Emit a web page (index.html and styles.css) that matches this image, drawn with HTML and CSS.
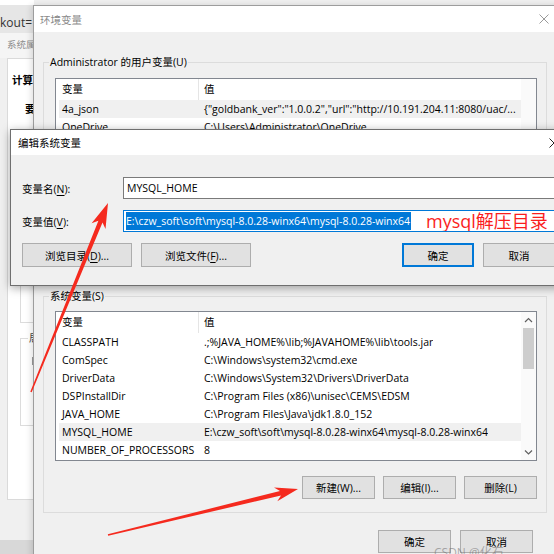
FILE: index.html
```html
<!DOCTYPE html>
<html lang="zh-CN">
<head>
<meta charset="utf-8">
<title>编辑系统变量</title>
<link rel="stylesheet" href="styles.css">
</head>
<body>
<div class="desktop">

  <div class="backwin">
    <div class="bw-top"></div>
    <div class="bw-bar">kout=</div>
    <div class="bw-crumb">系统属</div>
    <div class="bw-panel">
      <div class="bw-tab">计算</div>
      <div class="bw-heading">要</div>
      <div class="bw-box bw-box1"></div>
      <div class="bw-box bw-box2"><span class="bw-box-label">局</span><span class="bw-tick"></span></div>
    </div>
    <div class="bw-foot"></div>
  </div>

  <div class="envwin">
    <div class="titlebar env-titlebar">
      <span class="title inactive">环境变量</span>
      <svg class="close-icon" width="10" height="10" viewBox="0 0 10 10"><path d="M0.5 0.5L9.5 9.5M9.5 0.5L0.5 9.5" stroke="#9a9a9a" stroke-width="1" fill="none"/></svg>
    </div>
    <div class="env-body">
      <div class="group user-group">
        <span class="group-label">Administrator 的用户变量(U)</span>
        <div class="listview">
          <div class="lv-main">
            <div class="lv-header"><span class="c1">变量</span><span class="c2">值</span></div>
            <div class="lv-row hl"><span class="c1">4a_json</span><span class="c2">{"goldbank_ver":"1.0.0.2","url":"http://10.191.204.11:8080/uac/...</span></div>
            <div class="lv-row"><span class="c1">OneDrive</span><span class="c2">C:\Users\Administrator\OneDrive</span></div>
          </div>
          <div class="lv-scroll"></div>
        </div>
      </div>

      <div class="group sys-group">
        <span class="group-label">系统变量(S)</span>
        <div class="listview">
          <div class="lv-main">
            <div class="lv-header"><span class="c1">变量</span><span class="c2">值</span></div>
            <div class="lv-row"><span class="c1">CLASSPATH</span><span class="c2">.;%JAVA_HOME%\lib;%JAVAHOME%\lib\tools.jar</span></div>
            <div class="lv-row"><span class="c1">ComSpec</span><span class="c2">C:\Windows\system32\cmd.exe</span></div>
            <div class="lv-row"><span class="c1">DriverData</span><span class="c2">C:\Windows\System32\Drivers\DriverData</span></div>
            <div class="lv-row"><span class="c1">DSPInstallDir</span><span class="c2">C:\Program Files (x86)\unisec\CEMS\EDSM</span></div>
            <div class="lv-row"><span class="c1">JAVA_HOME</span><span class="c2">C:\Program Files\Java\jdk1.8.0_152</span></div>
            <div class="lv-row hl"><span class="c1">MYSQL_HOME</span><span class="c2">E:\czw_soft\soft\mysql-8.0.28-winx64\mysql-8.0.28-winx64</span></div>
            <div class="lv-row"><span class="c1">NUMBER_OF_PROCESSORS</span><span class="c2">8</span></div>
          </div>
          <div class="lv-scroll">
            <svg class="sb-arrow" width="15" height="16" viewBox="0 0 15 16"><path d="M4 10L7.5 6.5L11 10" stroke="#606060" stroke-width="1.2" fill="none"/></svg>
            <div class="sb-track"><div class="sb-thumb"></div></div>
            <svg class="sb-arrow" width="15" height="16" viewBox="0 0 15 16"><path d="M4 6.5L7.5 10L11 6.5" stroke="#606060" stroke-width="1.2" fill="none"/></svg>
          </div>
        </div>
        <div class="group-buttons">
          <button class="btn btn-sm">新建(W)...</button>
          <button class="btn btn-sm">编辑(I)...</button>
          <button class="btn btn-sm">删除(L)</button>
        </div>
      </div>

      <div class="dialog-buttons">
        <button class="btn btn-sm">确定</button>
        <button class="btn btn-sm">取消</button>
      </div>
    </div>
  </div>

  <div class="editwin">
    <div class="titlebar edit-titlebar">
      <span class="title">编辑系统变量</span>
      <svg class="close-icon" width="10" height="10" viewBox="0 0 10 10"><path d="M0.5 0.5L9.5 9.5M9.5 0.5L0.5 9.5" stroke="#222" stroke-width="1" fill="none"/></svg>
    </div>
    <div class="edit-body">
      <div class="field">
        <span class="field-label">变量名(<u>N</u>):</span>
        <div class="textbox">MYSQL_HOME</div>
      </div>
      <div class="field">
        <span class="field-label">变量值(<u>V</u>):</span>
        <div class="textbox focused"><span class="selection">E:\czw_soft\soft\mysql-8.0.28-winx64\mysql-8.0.28-winx64</span><span class="annotation">mysql解压目录</span></div>
      </div>
      <div class="edit-buttons">
        <button class="btn btn-wide">浏览目录(<u>D</u>)...</button>
        <button class="btn btn-wide">浏览文件(<u>F</u>)...</button>
        <button class="btn btn-sm btn-default push-right">确定</button>
        <button class="btn btn-sm">取消</button>
      </div>
    </div>
  </div>

  <svg class="arrows" width="554" height="554" viewBox="0 0 554 554">
    <polygon points="30.3,391.7 98.4,220.7 91.6,223.3 108,203 105.5,229 102.5,222.4 31.7,392.3" fill="#f52a1e"/>
    <polygon points="107.8,534.2 280,491.1 274,487.6 298,489 277.3,501.2 281,495.4 108.2,535.8" fill="#f52a1e"/>
  </svg>

  <span class="watermark">CSDN @化石</span>
</div>
</body>
</html>
```

FILE: styles.css
```css
* { box-sizing: border-box; margin: 0; padding: 0; }

body {
  width: 554px;
  height: 554px;
  overflow: hidden;
  background: #f0f0f0;
  font-family: "Open Sans", "Noto Sans CJK SC", sans-serif;
  font-size: 10.5px;
  color: #000;
}

.desktop {
  position: relative;
  width: 554px;
  height: 554px;
  overflow: hidden;
}

/* ---------- back window (System properties) ---------- */
.backwin {
  position: absolute;
  left: 0;
  top: 0;
  width: 34px;
  height: 554px;
  background: #f0f0f0;
  overflow: hidden;
}
.bw-top { height: 5px; background: #fff; }
.bw-bar {
  height: 28px;
  background: #e6e6e6;
  font-size: 12px;
  line-height: 16px;
  padding-top: 10px;
  color: #333;
  white-space: nowrap;
}
.bw-crumb {
  height: 25px;
  font-size: 9.5px;
  line-height: 12px;
  padding: 6px 0 0 7px;
  color: #8c8c8c;
  white-space: nowrap;
  background: #f5f5f5;
}
.bw-panel {
  margin-left: 7px;
  height: 442px;
  background: #fff;
  border: 1px solid #dadada;
  border-right: none;
}
.bw-tab {
  margin-top: 12px;
  padding-left: 4px;
  font-size: 10.5px;
  line-height: 18px;
  font-weight: bold;
  white-space: nowrap;
}
.bw-heading {
  margin: 13px 0 0 17px;
  font-size: 10.5px;
  line-height: 14px;
  font-weight: bold;
}
.bw-box {
  margin-left: 12px;
  border: 1px solid #dcdcdc;
  border-right: none;
}
.bw-box1 { margin-top: 80px; height: 127px; }
.bw-box2 { margin-top: 15px; height: 88px; }
.bw-box-label {
  display: block;
  width: max-content;
  margin: -7px 0 0 7px;
  padding: 0 1px;
  background: #fff;
  font-size: 10px;
  line-height: 13px;
  color: #444;
}
.bw-tick {
  display: block;
  margin: 12px 0 0 11px;
  width: 1px;
  height: 8px;
  background: #999;
}
.bw-foot {
  margin-top: 40px;
  height: 20px;
  background: #d8d8d8;
}

/* ---------- generic window parts ---------- */
.titlebar {
  display: flex;
  align-items: center;
  background: #fff;
  white-space: nowrap;
}
.title { flex: 1; }
.title.inactive { color: #8a8a8a; }

.btn {
  height: 23px;
  background: #e1e1e1;
  border: 1px solid #adadad;
  font-family: inherit;
  font-size: 10.5px;
  color: #000;
  white-space: nowrap;
}
.btn-sm { width: 73px; }
.btn-wide { width: 110px; }
.btn-default { border: 2px solid #0078d7; }

/* ---------- environment variables window ---------- */
.envwin {
  position: absolute;
  left: 33px;
  top: 5px;
  width: 540px;
  height: 560px;
  background: #f0f0f0;
  border: 1px solid #9d9d9d;
  box-shadow: -2px 0 6px rgba(0, 0, 0, 0.12);
}
.env-titlebar {
  height: 26px;
  padding-left: 6px;
}
.env-titlebar .close-icon { margin-right: 23px; }

.env-body {
  padding: 30px 0 0 9px;
}

.group {
  width: 504px;
  border: 1px solid #dcdcdc;
  padding: 0 9px 13px 11px;
}
.user-group { padding-bottom: 51px; }
.group-label {
  display: block;
  width: max-content;
  margin: -8px 0 0 -6px;
  padding: 0 1px;
  line-height: 15px;
  height: 15px;
  background: #f0f0f0;
  white-space: nowrap;
}
.sys-group { margin-top: 16px; }

.listview {
  display: flex;
  height: 150px;
  margin-top: 8px;
  background: #fff;
  border: 1px solid #828790;
  overflow: hidden;
}
.sys-group .listview { margin-top: 7px; }
.lv-main {
  flex: 1;
  min-width: 0;
  overflow: hidden;
}
.lv-header {
  display: flex;
  height: 21px;
  line-height: 21px;
  white-space: nowrap;
}
.lv-header .c1 {
  width: 143px;
  padding-left: 6px;
  border-right: 1px solid #e5e5e5;
}
.lv-header .c2 { padding-left: 5px; }
.lv-row {
  display: flex;
  height: 18px;
  line-height: 18px;
  margin-left: 3px;
  white-space: nowrap;
}
.lv-row.hl { background: #f0f0f0; }
.lv-row .c1 {
  width: 140px;
  flex: none;
  padding-left: 3px;
}
.lv-row .c2 {
  padding-left: 5px;
  overflow: hidden;
}
.lv-scroll {
  width: 15px;
  flex: none;
  display: flex;
  flex-direction: column;
  background: #fafafa;
}
.sb-arrow { display: block; flex: none; }
.sb-track { flex: 1; padding: 0 2px; }
.sb-thumb {
  height: 41px;
  background: #cdcdcd;
}

.group-buttons {
  display: flex;
  justify-content: flex-end;
  gap: 8px;
  margin-top: 15px;
}

.dialog-buttons {
  width: 504px;
  display: flex;
  justify-content: flex-end;
  gap: 9px;
  margin-top: 17px;
  padding-right: 14px;
}

/* ---------- edit system variable dialog ---------- */
.editwin {
  position: absolute;
  left: 10px;
  top: 129px;
  width: 562px;
  height: 157px;
  background: #f0f0f0;
  border: 1px solid #6f6f6f;
  box-shadow: 0 2px 9px rgba(0, 0, 0, 0.35);
}
.edit-titlebar {
  height: 25px;
  padding-left: 7px;
}
.edit-titlebar .close-icon { margin-right: 12px; }

.edit-body {
  padding: 22px 0 13px 11px;
}
.field {
  display: flex;
  align-items: center;
  height: 22px;
  margin-bottom: 11px;
}
.field-label {
  width: 101px;
  flex: none;
  white-space: nowrap;
}
.field-label u { text-underline-offset: 2px; }
.textbox {
  flex: 1;
  height: 22px;
  background: #fff;
  border: 1px solid #7a7a7a;
  padding: 0 3px;
  display: flex;
  align-items: center;
  white-space: nowrap;
  overflow: hidden;
}
.textbox.focused {
  border-color: #0078d7;
  padding-left: 2px;
}
.selection {
  background: #0078d7;
  color: #fff;
  line-height: 18px;
  padding-right: 1px;
}
.annotation {
  margin-left: 15px;
  color: #fa1e1e;
  font-size: 18px;
  line-height: 18px;
}
.edit-buttons {
  display: flex;
  align-items: center;
  gap: 9px;
  margin-top: 4px;
}
.edit-buttons u { text-underline-offset: 2px; }
.edit-buttons .btn { height: 24px; }
.push-right { margin-left: 142px; }
.edit-buttons .btn-sm { width: 72px; }

/* ---------- overlays ---------- */
.arrows {
  position: absolute;
  left: 0;
  top: 0;
  pointer-events: none;
}
.watermark {
  position: absolute;
  left: 434px;
  top: 546px;
  font-size: 12px;
  line-height: 14px;
  color: rgba(110, 110, 110, 0.55);
  white-space: nowrap;
}
```
